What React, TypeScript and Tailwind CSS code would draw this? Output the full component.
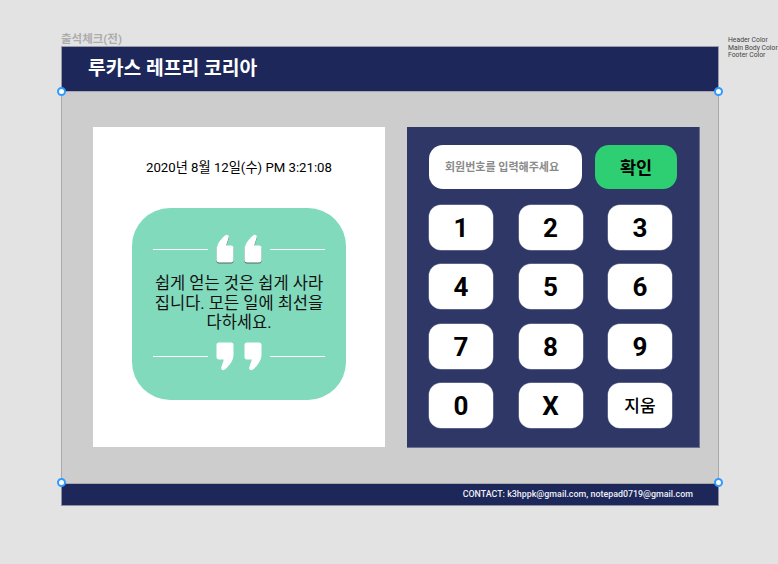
const FONT = "font-['Roboto','Noto_Sans_CJK_KR',sans-serif]";

function QuoteMark({ shadow }: { shadow?: boolean }) {
  return (
    <svg width="18" height="30" viewBox="0 0 18 30" className={shadow ? "drop-shadow-[0_1.5px_0_#4a6b60]" : ""}>
      <path
        d="M9.5 1.2 C11 0 13.2 1.2 12.8 3.2 C12 6.5 10.8 9 10.2 11.5 L15 11.5 C16.6 11.5 17.5 12.4 17.5 14 L17.5 26 C17.5 27.6 16.6 28.5 15 28.5 L3 28.5 C1.4 28.5 .5 27.6 .5 26 L.5 16 C.5 10.5 5 4.5 9.5 1.2 Z"
        fill="#fff"
      />
    </svg>
  );
}

function QuoteRow({ close }: { close?: boolean }) {
  return (
    <div className="flex items-center justify-center h-[30px]">
      <div className="w-[55px] h-[1px] bg-white" />
      <div className={`flex gap-[10px] mx-[8px] ${close ? "rotate-180" : ""}`}>
        <QuoteMark shadow={!close} />
        <QuoteMark shadow={!close} />
      </div>
      <div className="w-[55px] h-[1px] bg-white" />
    </div>
  );
}

function Key({ label, small }: { label: string; small?: boolean }) {
  return (
    <div
      className={`w-[64px] h-[45px] bg-white rounded-[12px] flex items-center justify-center pt-[2px] text-black shadow-[0_0_0_0.5px_#8a90aa] ${
        small ? "text-[17px] font-medium" : "text-[26px] font-bold"
      }`}
    >
      {label}
    </div>
  );
}

function Handle({ className }: { className: string }) {
  return <div className={`absolute w-[9px] h-[9px] rounded-full bg-white border-2 border-[#2f9bff] ${className}`} />;
}

export default function App() {
  const keys = ["1", "2", "3", "4", "5", "6", "7", "8", "9", "0", "X"];
  return (
    <div className={`relative w-[778px] h-[564px] bg-[#e3e3e3] overflow-hidden pt-[31px] pl-[61px] ${FONT}`}>
      <div className="h-[15px] pt-[1px] text-[11.5px] leading-[15px] font-bold text-[#adadad]">출석체크(전)</div>

      <div className="absolute left-[728px] top-[37px] text-[6.8px] leading-[7.7px] text-[#444] whitespace-nowrap">
        <div>Header Color</div>
        <div>Main Body Color</div>
        <div>Footer Color</div>
      </div>

      <div className="relative w-[658px] h-[460px] flex flex-col">
        <header className="h-[46px] bg-[#1d2759] border border-[#9a9cac] border-b-[#a8a8b0] pl-[26px] pt-[1px] flex items-center text-white text-[19.3px] font-bold">
          루카스 레프리 코리아
        </header>

        <main className="h-[392px] bg-[#cdcdcd] border-x border-b border-[#a8a8a8] pl-[31px] pt-[35px] flex gap-[22px]">
          <section className="w-[292px] h-[320px] bg-white flex flex-col items-center pt-[32px]">
            <div className="h-[17px] text-[13.2px] leading-[17px] text-black">2020년 8월 12일(수) PM 3:21:08</div>
            <div className="mt-[32px] w-[214px] h-[192px] bg-[#82dabc] rounded-[38px] pt-[26px] flex flex-col">
              <QuoteRow />
              <div className="h-[60px] mt-[10px] px-[18px] text-center text-[16.5px] leading-[19.6px] text-[#111]">
                쉽게 얻는 것은 쉽게 사라 집니다. 모든 일에 최선을 다하세요.
              </div>
              <div className="mt-[7px]">
                <QuoteRow close />
              </div>
            </div>
          </section>

          <section className="w-[293px] h-[321px] bg-[#2e3766] border-r border-b border-[#6c7190] pl-[22px] pt-[18px] flex flex-col">
            <div className="flex h-[44px]">
              <div className="w-[153px] bg-white rounded-[14px] flex items-center pl-[16px] pt-[2px] text-[11px] font-bold text-[#8a8a8a]">
                회원번호를 입력해주세요
              </div>
              <div className="ml-[13px] w-[82px] bg-[#2dcf72] rounded-[14px] flex items-center justify-center pt-[3px] text-[17.5px] font-bold text-black">
                확인
              </div>
            </div>
            <div className="mt-[16px] grid grid-cols-[64px_64px_64px] gap-x-[25.5px] gap-y-[14.3px]">
              {keys.map((k) => (
                <Key key={k} label={k} />
              ))}
              <Key label="지움" small />
            </div>
          </section>
        </main>

        <footer className="h-[22px] bg-[#1d2759] border-x border-b border-[#8e90a4] flex items-center justify-end pr-[25px] text-[8.9px] font-medium text-[#eef0f6]">
          CONTACT: k3hppk@gmail.com, notepad0719@gmail.com
        </footer>

        <Handle className="left-[-4px] top-[41px]" />
        <Handle className="left-[653px] top-[41px]" />
        <Handle className="left-[-4px] top-[432px]" />
        <Handle className="left-[653px] top-[432px]" />
      </div>
    </div>
  );
}
